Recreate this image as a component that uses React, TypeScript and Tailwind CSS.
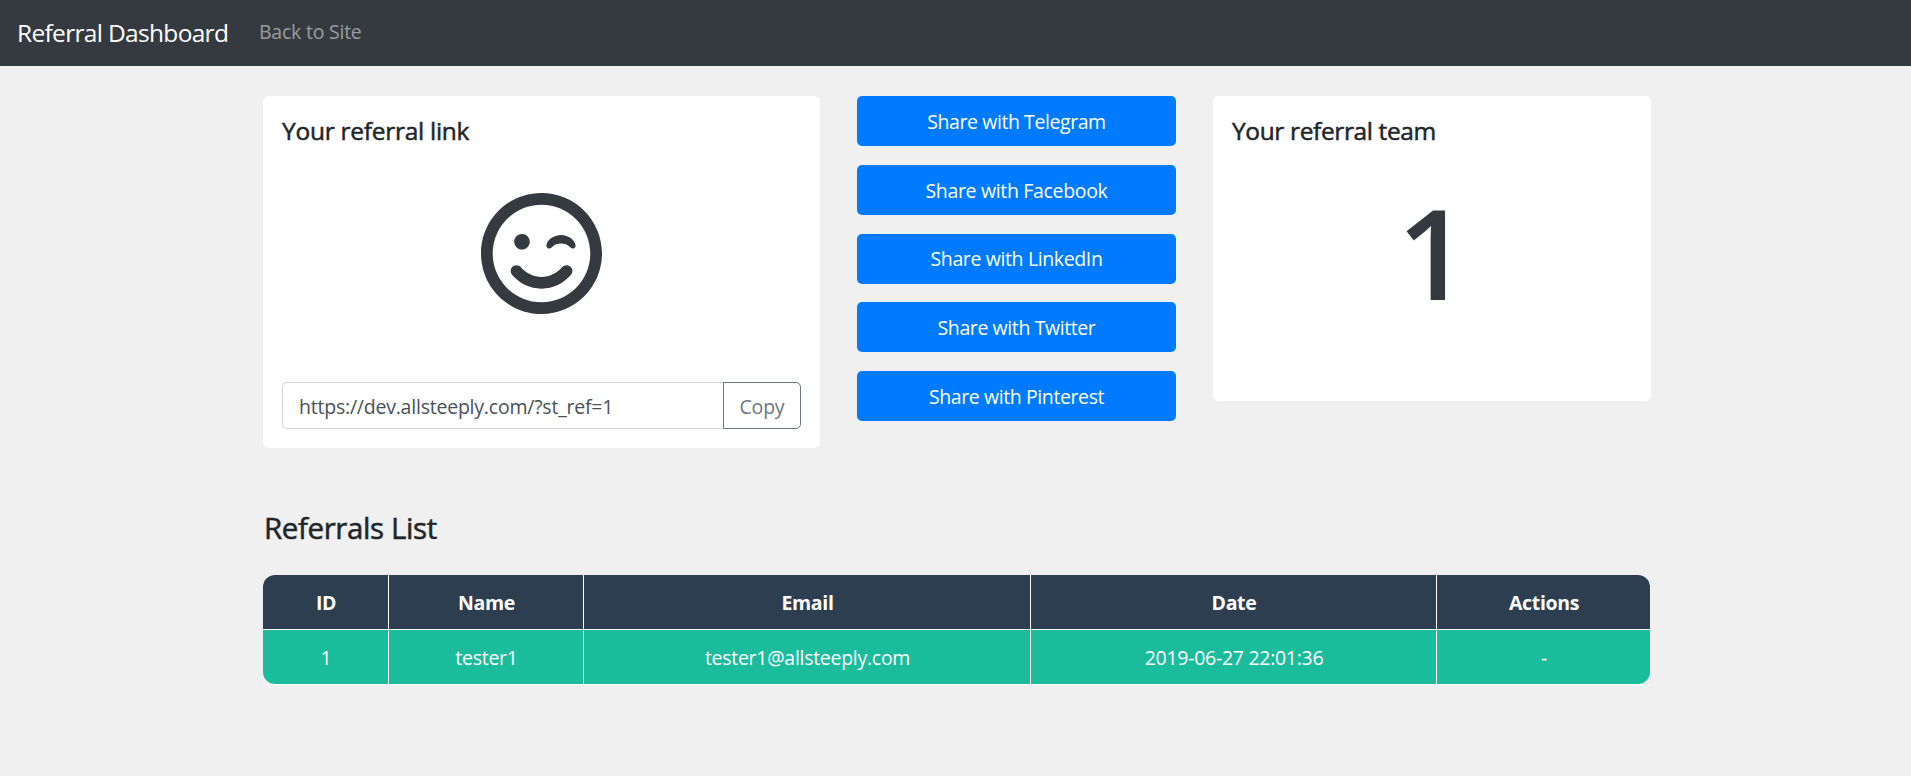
import { FaRegSmileWink } from "react-icons/fa";

const networks = [
  { name: "Telegram", tracking: "tracking-[-0.42px]" },
  { name: "Facebook", tracking: "tracking-[-0.33px]" },
  { name: "LinkedIn", tracking: "tracking-[-0.37px]" },
  { name: "Twitter", tracking: "tracking-[-0.4px]" },
  { name: "Pinterest", tracking: "tracking-[-0.4px]" },
];

const columns = ["ID", "Name", "Email", "Date", "Actions"];
const referral = ["1", "tester1", "tester1@allsteeply.com", "2019-06-27 22:01:36", "-"];

function Navbar() {
  return (
    <nav className="flex h-[66px] items-center bg-[#343a40] pl-4">
      <a className="w-[243px] pb-[2px] pl-px text-[24.5px] leading-[37px] tracking-[-0.68px] whitespace-nowrap text-white">
        Referral Dashboard
      </a>
      <a className="pb-[2px] text-[19.5px] leading-[30px] tracking-[-0.23px] text-white/50">Back to Site</a>
    </nav>
  );
}

function LinkCard() {
  return (
    <section className="flex h-[352px] w-[557px] flex-col rounded-md bg-white px-[19px] pt-5">
      <h5 className="text-[24.5px] leading-[30px] font-medium tracking-[-0.27px] [-webkit-text-stroke:0.5px_#212529]">Your referral link</h5>
      <div className="mt-[44.5px] flex justify-center text-[#343a40]">
        <FaRegSmileWink className="h-[125px] w-[121px]" />
      </div>
      <div className="mt-[66.5px] flex h-[47px]">
        <div className="flex flex-1 items-center rounded-l-[5px] border border-r-0 border-[#ced4da] pt-[2px] pl-4 text-[19.5px] tracking-[-0.22px] text-[#495057]">
          https://dev.allsteeply.com/?st_ref=1
        </div>
        <button className="w-[78px] rounded-r-[5px] border border-[#6c757d] pt-[2px] text-[19.5px] tracking-[-0.2px] text-[#6c757d]">
          Copy
        </button>
      </div>
    </section>
  );
}

function ShareButtons() {
  return (
    <div className="flex w-[319px] flex-col gap-[18.75px]">
      {networks.map((n) => (
        <button
          key={n.name}
          className={`h-[50px] rounded-[5px] bg-[#007bff] pt-[1.6px] text-[19.5px] leading-[30px] text-white ${n.tracking}`}
        >
          Share with {n.name}
        </button>
      ))}
    </div>
  );
}

function TeamCard() {
  return (
    <section className="h-[305px] w-[438px] rounded-md bg-white px-[19px] pt-5">
      <h5 className="text-[24.5px] leading-[30px] font-medium tracking-[-0.37px] [-webkit-text-stroke:0.5px_#212529]">Your referral team</h5>
      <div className="mt-[31px] pl-[2px] text-center text-[125px] leading-[150px] font-semibold text-[#343a40]">1</div>
    </section>
  );
}

function ReferralTable() {
  return (
    <div className="w-[1387px] border-b border-white text-[19.5px] tracking-[-0.35px] text-white">
      <div className="overflow-hidden rounded-xl">
        <div className="grid h-[55px] grid-cols-[125px_194px_446px_405px_213px] gap-px bg-white pb-px font-bold">
          {columns.map((c) => (
            <div key={c} className="flex items-center justify-center bg-[#2c3e50] pt-[2px] pl-px">{c}</div>
          ))}
        </div>
        <div className="grid h-[54px] grid-cols-[125px_194px_446px_405px_213px] gap-px bg-white">
          {referral.map((c) => (
            <div key={c} className="flex items-center justify-center bg-[#1abc9c] pt-[2px] pl-px tracking-[-0.28px]">{c}</div>
          ))}
        </div>
      </div>
    </div>
  );
}

export default function App() {
  return (
    <div className="min-h-screen bg-[#f0f0f0] font-['Open_Sans',sans-serif] text-[#212529]">
      <Navbar />
      <main className="pt-[30px] pl-[263px]">
        <div className="flex items-start gap-[37px]">
          <LinkCard />
          <ShareButtons />
          <TeamCard />
        </div>
        <h4 className="mt-[62px] mb-[29px] pl-px text-[29.5px] leading-[36px] font-medium tracking-[-0.4px] [-webkit-text-stroke:0.5px_#212529]">Referrals List</h4>
        <ReferralTable />
      </main>
    </div>
  );
}
